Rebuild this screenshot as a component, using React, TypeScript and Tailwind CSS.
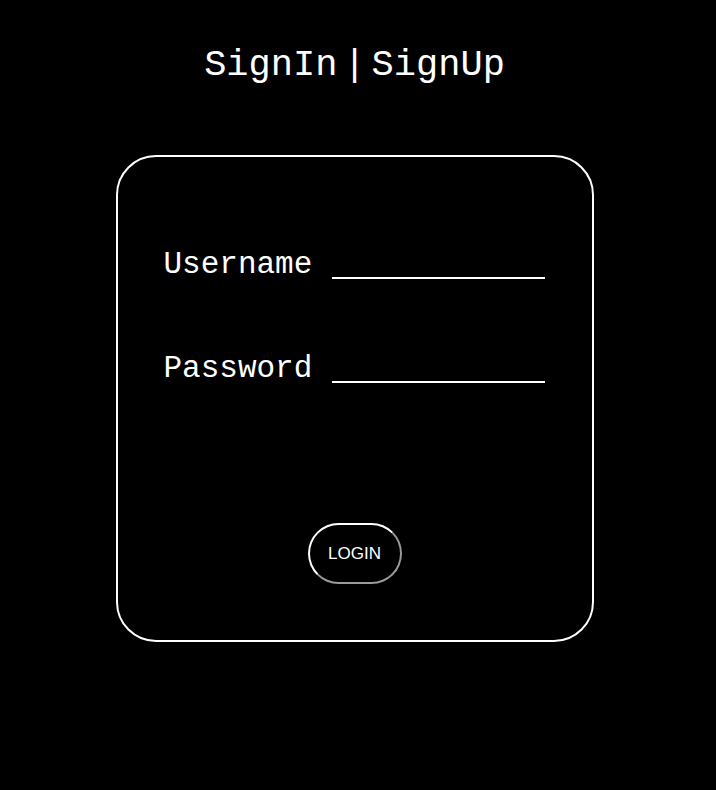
import React from 'react';

const mono = { fontFamily: '"Liberation Mono", "Courier New", monospace' };

const Field: React.FC<{ label: string; type?: string; className?: string }> = ({ label, type = 'text', className = '' }) => (
  <div className={`flex items-end gap-[20px] ${className}`}>
    <label className="text-[31px] leading-none text-white whitespace-pre" style={mono}>
      {label}
    </label>
    <input
      type={type}
      className="w-[213px] h-[30px] mb-[1px] bg-transparent border-0 border-b-2 border-white text-white outline-none"
    />
  </div>
);

const App: React.FC = () => {
  return (
    <div className="min-h-[790px] bg-black flex flex-col items-center pr-[7px]">
      {/* Header */}
      <h1 className="mt-[47px] flex text-[37px] leading-none text-white" style={mono}>
        <span>SignIn</span>
        <span className="mx-[6px]">|</span>
        <span>SignUp</span>
      </h1>

      {/* Login card */}
      <div className="mt-[71px] w-[478px] border-2 border-white rounded-[40px] pt-[92px] pb-[56px] pl-[46px] flex flex-col">
        <Field label="Username" />
        <Field label="Password" type="password" className="mt-[73px]" />
        <button
          className="self-center -ml-[46px] mt-[139px] w-[94px] h-[61px] rounded-full border-2 border-t-white border-l-white border-r-[#9a9a9a] border-b-[#9a9a9a] text-white text-[17px] bg-black"
          style={{ fontFamily: '"Liberation Sans", Arial, sans-serif' }}
        >
          LOGIN
        </button>
      </div>
    </div>
  );
};

export default App;
